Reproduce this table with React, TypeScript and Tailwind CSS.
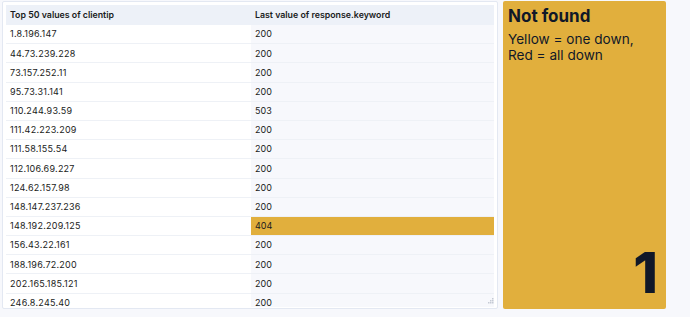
const rows: [string, string][] = [
  ["1.8.196.147", "200"],
  ["44.73.239.228", "200"],
  ["73.157.252.11", "200"],
  ["95.73.31.141", "200"],
  ["110.244.93.59", "503"],
  ["111.42.223.209", "200"],
  ["111.58.155.54", "200"],
  ["112.106.69.227", "200"],
  ["124.62.157.98", "200"],
  ["148.147.237.236", "200"],
  ["148.192.209.125", "404"],
  ["156.43.22.161", "200"],
  ["188.196.72.200", "200"],
  ["202.165.185.121", "200"],
  ["246.8.245.40", "200"],
]

export default function App() {
  return (
    <div className="flex h-[317px] w-[690px] gap-[5px] bg-[#f7f8fc] pl-[2px] pt-[1px] text-[#1a1c21] [font-family:Inter,'Liberation_Sans',sans-serif]">
      <div className="relative flex h-[308px] w-[496px] flex-col rounded-[2px] border border-[#e3e8f2] bg-white px-[3px] pt-[3px]">
        <div className="h-[302px] overflow-hidden">
          <div className="flex h-[20px] items-center bg-[#edf1f8] text-[8.8px] font-semibold">
            <div className="w-[245px] pl-[4px]">Top 50 values of clientip</div>
            <div className="flex-1 pl-[4px]">Last value of response.keyword</div>
          </div>
          {rows.map(([ip, code]) => (
            <div key={ip} className="flex h-[19.2px] border-b border-[#eef1f6] text-[9px]">
              <div className="flex w-[245px] items-center pl-[4px] tracking-[0.25px]">{ip}</div>
              <div
                className={
                  code === "404"
                    ? "flex flex-1 items-center bg-[#e1af3d] pl-[4px]"
                    : "flex flex-1 items-center bg-[#f7f8fc] pl-[4px]"
                }
              >
                {code}
              </div>
            </div>
          ))}
        </div>
        <svg className="absolute bottom-[4px] right-[3px]" width="6" height="6" viewBox="0 0 6 6">
          <rect x="4" y="0" width="1.5" height="1.5" fill="#c5cad4" />
          <rect x="2" y="2" width="1.5" height="1.5" fill="#c5cad4" />
          <rect x="4" y="2" width="1.5" height="1.5" fill="#c5cad4" />
          <rect x="0" y="4" width="1.5" height="1.5" fill="#c5cad4" />
          <rect x="2" y="4" width="1.5" height="1.5" fill="#c5cad4" />
          <rect x="4" y="4" width="1.5" height="1.5" fill="#c5cad4" />
        </svg>
      </div>
      <div className="flex h-[308px] w-[163px] flex-col rounded-[2px] bg-[#e1af3d] px-[5px] pt-[5px] text-[#101828]">
        <div className="text-[17px] font-bold leading-[21px]">Not found</div>
        <div className="mt-[4px] text-[13.6px] leading-[16px]">
          Yellow = one down,
          <br />
          Red = all down
        </div>
        <div className="mt-auto self-end pb-[12px] pr-[3px] text-[56px] font-extrabold leading-[48px]">1</div>
      </div>
    </div>
  )
}
